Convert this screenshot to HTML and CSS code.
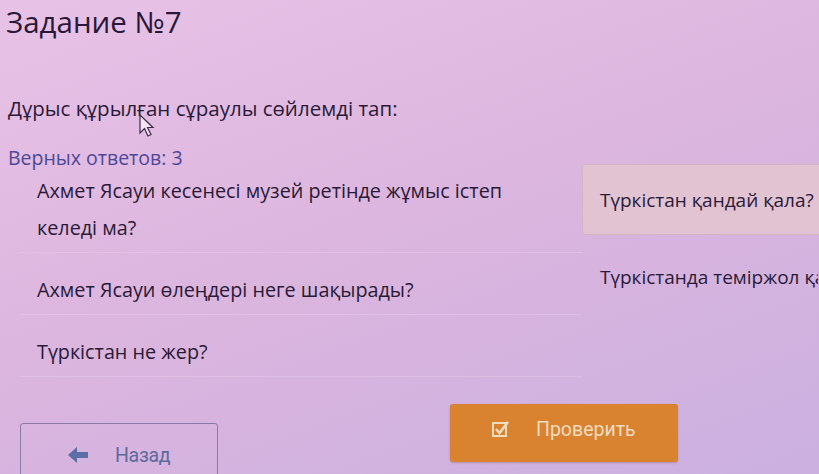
FILE: index.html
```html
<!DOCTYPE html>
<html lang="ru">
<head>
<meta charset="utf-8">
<title>Задание №7</title>
<link rel="stylesheet" href="styles.css">
</head>
<body>
<div class="page">
  <h1 class="title">Задание №7</h1>
  <p class="question">Дұрыс құрылған сұраулы сөйлемді тап:</p>
  <p class="count">Верных ответов: 3</p>
  <div class="options">
    <div class="col col-left">
      <div class="opt">Ахмет Ясауи кесенесі музей ретінде жұмыс істеп келеді ма?</div>
      <div class="opt">Ахмет Ясауи өлеңдері неге шақырады?</div>
      <div class="opt">Түркістан не жер?</div>
    </div>
    <div class="col col-right">
      <div class="opt opt-r selected">Түркістан қандай қала?</div>
      <div class="opt opt-r">Түркістанда теміржол қайда?</div>
    </div>
  </div>
  <div class="footer">
    <button class="btn btn-back">
      <svg class="ico-arrow" viewBox="0 0 20 18" width="20" height="18"><path d="M0 9 L9 1 L9 6 L20 6 L20 12 L9 12 L9 17 Z" fill="#5b6fa6"/></svg>
      <span>Назад</span>
    </button>
    <button class="btn btn-check">
      <svg class="ico-check" viewBox="0 0 18 18" width="18" height="18"><rect x="1" y="3" width="13" height="13" fill="none" stroke="#f2dcc0" stroke-width="2"/><path d="M4 9 L7.5 13 L16 2" fill="none" stroke="#f2dcc0" stroke-width="2.6"/></svg>
      <span>Проверить</span>
    </button>
  </div>
  <svg class="cursor" viewBox="0 0 16 24" width="16" height="24"><path d="M1 1 L1 19 L5.5 14.5 L9 22 L12 20.5 L8.5 13.5 L14 13.5 Z" fill="#f4e4f4" stroke="#3a2a48" stroke-width="1.2"/></svg>
</div>
</body>
</html>
```
FILE: styles.css
```css
html, body {
  margin: 0;
  height: 100%;
  overflow: hidden;
}
body {
  background: linear-gradient(160deg, #e8c2e6 0%, #dcb6de 45%, #cbb0e0 100%);
  font-family: "Open Sans", "Noto Sans", sans-serif;
  color: #2a1a38;
}
.page {
  position: relative;
  padding: 3px 0 0 6px;
  height: 474px;
  box-sizing: border-box;
}
.title {
  margin: 0;
  font-size: 29.5px;
  font-weight: 400;
  line-height: 38px;
  color: #2a1838;
}
.question {
  margin: 52px 0 0 2px;
  font-size: 20.5px;
  line-height: 30px;
}
.count {
  margin: 20px 0 0 2px;
  font-size: 19.5px;
  line-height: 30px;
  color: #4d4896;
}
.options {
  display: flex;
  margin-top: -13px;
}
.col {
  display: flex;
  flex-direction: column;
}
.col-left {
  margin-left: 14px;
  width: 562px;
  flex: 0 0 562px;
  gap: 12px;
  margin-top: 6px;
}
.col-right {
  margin-left: 0;
  margin-top: 4px;
  flex: 1 1 0;
  min-width: 0;
  gap: 6px;
}
.opt {
  font-size: 19.8px;
  line-height: 37px;
  padding: 6px 17px;
  border-bottom: 1px solid rgba(255, 240, 255, 0.18);
}
.col-left .opt {
  padding-right: 30px;
}
.opt-r {
  font-size: 19px;
  padding: 17px 16px 15px 17px;
  white-space: nowrap;
  overflow: hidden;
  border: 1px solid transparent;
}
.opt-r.selected {
  background: #e1c3d2;
  border: 1px solid #d4b3c3;
  border-radius: 3px;
  margin-right: -10px;
}
.footer {
  display: flex;
  align-items: flex-start;
  margin-top: 22px;
  padding-left: 14px;
}
.btn {
  display: flex;
  align-items: center;
  font-family: "Roboto", "Liberation Sans", sans-serif;
  font-size: 19.5px;
  border-radius: 3px;
  cursor: pointer;
}
.btn-back {
  margin-top: 24px;
  width: 198px;
  height: 64px;
  background: transparent;
  border: 1px solid #8a7ca6;
  color: #5e6a9c;
  padding: 0 0 0 47px;
  gap: 27px;
}
.btn-back span {
  letter-spacing: -0.3px;
}
.btn-check {
  margin-left: 232px;
  margin-top: 5px;
  width: 228px;
  height: 58px;
  background: #d98330;
  border: none;
  color: #f2dcc0;
  padding: 0 0 8px 42px;
  gap: 26px;
  box-shadow: 0 1px 2px rgba(120, 60, 40, 0.3);
}
.cursor {
  position: absolute;
  left: 139px;
  top: 114px;
}
```
